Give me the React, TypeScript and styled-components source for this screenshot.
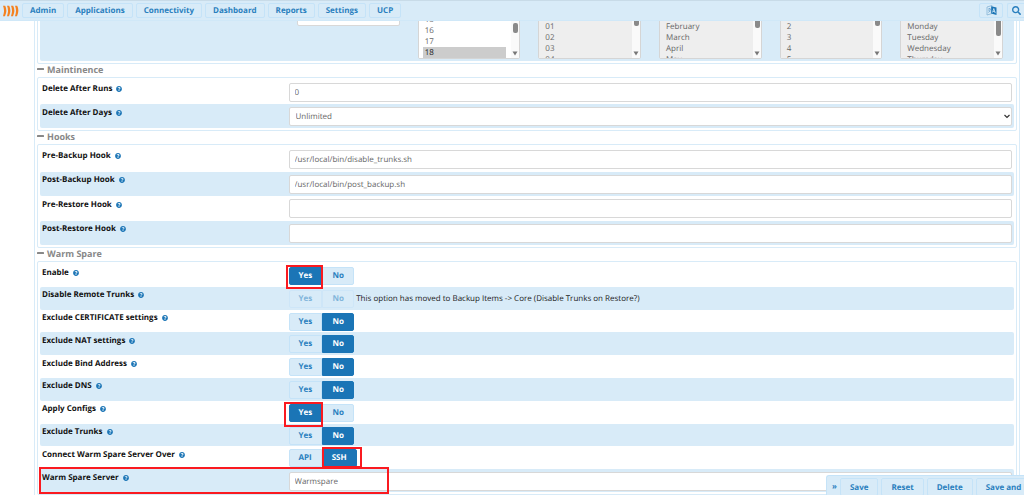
import React, { useEffect, useRef } from "react";
import styled, { createGlobalStyle, css } from "styled-components";
import { FaQuestionCircle, FaSearch } from "react-icons/fa";

const PALE = "#d8ebf8";
const LINE = "#c5e3f8";
const BLUE = "#1b75b6";
const LINK = "#2a7fbe";

const GlobalStyle = createGlobalStyle`
  * { box-sizing: border-box; }
  body { margin: 0; background: #fff; color: #111; font: 8px/16px "Open Sans", "Noto Sans", sans-serif; text-rendering: geometricPrecision; }
  button, input, select { font: inherit; margin: 0; text-rendering: inherit; }
`;

const Page = styled.div`
  position: relative;
  height: 100vh;
  display: flex;
  flex-direction: column;
  overflow: hidden;
`;

const Navbar = styled.header`
  position: relative;
  z-index: 2;
  flex: none;
  height: 21px;
  padding: 0 0 0 3px;
  display: flex;
  align-items: center;
  background: ${PALE};
  border-top: 1px solid #c8dbe8;
  border-bottom: 1px solid #d0e8f8;
`;

const Menu = styled.nav`
  display: flex;
  gap: 3px;
  margin-left: 3px;
  flex: 1;
`;

const NavButton = styled.button`
  height: 15px;
  padding: 0 7px;
  border: 1px solid ${LINE};
  border-radius: 2px;
  background: ${PALE};
  color: ${LINK};
  font-weight: 700;
  line-height: 13px;
  display: flex;
  align-items: center;
  justify-content: center;
  white-space: nowrap;
`;

const IconButton = styled(NavButton)`
  width: 24px;
  padding: 0;
  margin-left: 4px;
  &:last-child { width: 17px; border-right: 0; border-radius: 2px 0 0 2px; }
`;

const Main = styled.main`
  flex: 1;
  min-height: 0;
  overflow: hidden;
`;

const Panel = styled.form`
  margin: -24px 4px 0 34px;
  padding: 0 2px;
  border: 1px solid ${PALE};
`;

const Fieldset = styled.section`
  padding: 2px;
  border: 1px solid ${PALE};
  border-radius: 2px;
`;

const Heading = styled.h2`
  margin: 0;
  height: 13px;
  display: flex;
  align-items: flex-start;
  gap: 3px;
  color: #888;
  font-size: 9px;
  line-height: 11px;
  font-weight: 700;
  svg { margin-top: 4px; }
`;

const Rows = styled.div<{ $height: number }>`
  display: grid;
  grid-auto-rows: 1fr;
  height: ${(p) => p.$height}px;
`;

const Row = styled.div<{ $shade?: boolean }>`
  display: grid;
  grid-template-columns: minmax(0, 1fr) minmax(0, 3fr);
  min-height: 0;
  border-radius: 2px;
  background: ${(p) => (p.$shade ? PALE : "#fff")};
`;

const LabelCell = styled.div`
  display: flex;
  align-items: center;
  gap: 4px;
  height: 17px;
  padding-left: 2px;
  font-weight: 700;
  svg { color: ${BLUE}; }
`;

const ControlCell = styled.div`
  display: flex;
  align-items: flex-start;
  padding: 3px 2px 0 5px;
`;

const field = css`
  width: 100%;
  height: 19px;
  border: 1px solid #d8d8d8;
  border-radius: 2px;
  background: #fff;
  color: #666;
  outline: 0;
`;

const TextInput = styled.input`
  ${field}
  padding: 0 5px;
`;

const SelectWrap = styled.div`
  position: relative;
  width: 100%;
  display: flex;
  svg { position: absolute; right: 2px; top: 7px; pointer-events: none; }
`;

const Dropdown = styled.select`
  ${field}
  appearance: none;
  padding: 0 6px;
`;

const Toggle = styled.div<{ $disabled?: boolean }>`
  display: flex;
  opacity: ${(p) => (p.$disabled ? 0.5 : 1)};
`;

const ToggleOption = styled.button<{ $on?: boolean }>`
  height: 18px;
  min-width: 32px;
  padding: 0 9px;
  border: 1px solid ${(p) => (p.$on ? BLUE : LINE)};
  background: ${(p) => (p.$on ? BLUE : PALE)};
  color: ${(p) => (p.$on ? "#fff" : LINK)};
  font-weight: 700;
  line-height: 16px;
  &:first-child { min-width: 33px; border-radius: 2px 0 0 2px; }
  &:last-child { border-radius: 0 2px 2px 0; }
`;

const Note = styled.span`
  margin-left: 2px;
  line-height: 18px;
  color: #222;
`;

const Schedule = styled.div`
  height: 60px;
  padding: 0 11px 2px 257px;
  display: grid;
  grid-template-columns: repeat(6, minmax(0, 1fr));
  gap: 18px;
  border-radius: 2px;
  background: ${PALE};
`;

const ScheduleType = styled(Dropdown)`
  margin-top: 6px;
`;

const ListWrap = styled.div`
  position: relative;
  height: 50px;
  margin-top: 8px;
  overflow: hidden;
  border: 1px solid #d5d5d5;
  border-radius: 2px;
  background: #fff;
`;

const List = styled.select`
  display: block;
  width: 100%;
  height: 48px;
  padding: 0 13px 0 4px;
  border: 0;
  border-radius: 0;
  outline: 0;
  background: #fff;
  color: #666;
  scrollbar-width: none;
  &:disabled { background: #eee; color: #666; opacity: 1; }
  option { height: 11px; min-height: 11px; padding: 0 2px; line-height: 11px; color: #666; }
  option:checked { background: #ccc linear-gradient(#ccc, #ccc); color: #222; }
`;

const ScrollTrack = styled.span`
  position: absolute;
  top: 0;
  right: 0;
  bottom: 0;
  width: 8px;
  background: #fafafa;
  svg { position: absolute; left: 1px; bottom: 2px; }
`;

const ScrollThumb = styled.span<{ $top: number; $size: number }>`
  position: absolute;
  left: 2px;
  width: 5px;
  top: ${(p) => p.$top}px;
  height: ${(p) => p.$size}px;
  border-radius: 2px;
  background: #8a8a8a;
`;

const ActionBar = styled.div`
  position: absolute;
  z-index: 3;
  right: 0;
  bottom: 0;
  width: 198px;
  height: 20px;
  padding: 2px 0 0 5px;
  display: flex;
  gap: 3px;
  overflow: hidden;
  background: ${PALE};
  border: 1px solid ${LINE};
  border-width: 1px 0 0 1px;
  border-radius: 3px 0 0 0;
`;

const ActionButton = styled(NavButton)`
  flex: none;
  height: 18px;
  padding: 0 9px;
`;

const Collapse = styled.button`
  width: 5px;
  padding: 0;
  border: 0;
  background: none;
  color: ${LINK};
  font-weight: 700;
  line-height: 17px;
`;

const Mark = styled.span<{ $x: number; $y: number; $w: number; $h: number }>`
  position: absolute;
  z-index: 1;
  left: ${(p) => p.$x}px;
  top: ${(p) => p.$y}px;
  width: ${(p) => p.$w}px;
  height: ${(p) => p.$h}px;
  border: 2px solid #fa1a20;
  pointer-events: none;
`;

const Anchor = styled.div`
  position: relative;
  width: 100%;
  display: flex;
`;

const ServerRow = styled(Row)`
  position: relative;
`;

const Logo = () => (
  <svg width="16" height="12" viewBox="0 0 16 12" aria-hidden="true">
    <g fill="#f58220">
      {[0, 4, 8, 12].map((x) => (
        <path key={x} d={`M${x} .8 h2.200 Q${x + 4.6} 5.500 ${x + 2} 11.200 H${x} Q${x + 2} 5.500 ${x} .8z`} />
      ))}
    </g>
  </svg>
);

const LanguageIcon = () => (
  <svg width="11" height="11" viewBox="0 0 11 11" aria-hidden="true">
    <path d="M1 2 6 .5v8L1 10z" fill="#d8ebf8" stroke="#86b4d6" strokeWidth=".8" />
    <path d="M2 4h3M3.500 3v1M2.200 7.500Q4 6.500 4.500 4M2.500 5.200 4.500 7.200" stroke="#5d9ac8" strokeWidth=".7" fill="none" />
    <path d="M5.200 1.200 10.500 2.500v7.500L5.200 8.500z" fill={BLUE} />
    <path d="m6.500 7.500 1.300-4 1.500 4.600M7 6.300l2 .5" stroke="#d8ebf8" strokeWidth=".8" fill="none" />
  </svg>
);

const Dash = () => (
  <svg width="7" height="2" viewBox="0 0 7 2" aria-hidden="true">
    <rect width="7" height="2" rx=".5" fill="#888" />
  </svg>
);

type ListProps = { label: string; options: string[]; value?: string; scroll: number; thumb: [number, number]; disabled?: boolean };

const ListBox = ({ label, options, value, scroll, thumb, disabled }: ListProps) => {
  const ref = useRef<HTMLSelectElement>(null);
  useEffect(() => {
    if (ref.current) ref.current.scrollTop = scroll;
  }, [scroll]);
  return (
    <ListWrap>
      <List ref={ref} multiple aria-label={label} defaultValue={value ? [value] : []} disabled={disabled}>
        {options.map((o) => <option key={o}>{o}</option>)}
      </List>
      <ScrollTrack>
        <ScrollThumb $top={thumb[0]} $size={thumb[1]} />
        <svg width="6" height="5" viewBox="0 0 6 5"><path d="M.5.500h5L3 4.500z" fill="#777" /></svg>
      </ScrollTrack>
    </ListWrap>
  );
};

const Label = ({ id, text }: { id: string; text: string }) => (
  <LabelCell>
    <label htmlFor={id}>{text}</label>
    <FaQuestionCircle size={6} />
  </LabelCell>
);

const range = (from: number, to: number, pad = 1) =>
  Array.from({ length: to - from + 1 }, (_, i) => String(from + i).padStart(pad, "0"));

const MONTHS = ["January", "February", "March", "April", "May", "June", "July", "August"];
const DAYS = ["Sunday", "Monday", "Tuesday", "Wednesday", "Thursday", "Friday", "Saturday"];

const HOOKS = [
  ["Pre-Backup Hook", "/usr/local/bin/disable_trunks.sh"],
  ["Post-Backup Hook", "/usr/local/bin/post_backup.sh"],
  ["Pre-Restore Hook", ""],
  ["Post-Restore Hook", ""],
];

type Choice = { text: string; options?: [string, string]; on?: number; note?: string; mark?: [number, number, number, number] };

const CHOICES: Choice[] = [
  { text: "Enable", on: 0, mark: [-3, -2, 37, 24] },
  { text: "Disable Remote Trunks", note: "This option has moved to Backup Items -> Core (Disable Trunks on Restore?)" },
  { text: "Exclude CERTIFICATE settings", on: 1 },
  { text: "Exclude NAT settings", on: 1 },
  { text: "Exclude Bind Address", on: 1 },
  { text: "Exclude DNS", on: 1 },
  { text: "Apply Configs", on: 0, mark: [-5, -2, 39, 25] },
  { text: "Exclude Trunks", on: 1 },
  { text: "Connect Warm Spare Server Over", options: ["API", "SSH"], on: 1, mark: [33, -2, 40, 21] },
];

export default function App() {
  return (
    <Page>
      <GlobalStyle />
      <Navbar>
        <Logo />
        <Menu>
          {["Admin", "Applications", "Connectivity", "Dashboard", "Reports", "Settings", "UCP"].map((m) => (
            <NavButton key={m} type="button">{m}</NavButton>
          ))}
        </Menu>
        <IconButton type="button" aria-label="Language"><LanguageIcon /></IconButton>
        <IconButton type="button" aria-label="Search"><FaSearch size={9} /></IconButton>
      </Navbar>
      <Main>
        <Panel onSubmit={(e) => e.preventDefault()}>
          <Fieldset>
            <Schedule>
              <ScheduleType aria-label="Schedule type"><option></option></ScheduleType>
              <ListBox label="Minute" options={range(0, 59, 2)} value="18" scroll={161} thumb={[13, 10]} />
              <ListBox label="Hour" options={range(0, 23, 2)} scroll={0} thumb={[6, 10]} disabled />
              <ListBox label="Month" options={MONTHS} scroll={0} thumb={[6, 12]} disabled />
              <ListBox label="Day of month" options={range(1, 31)} scroll={0} thumb={[6, 10]} disabled />
              <ListBox label="Day of week" options={DAYS} scroll={0} thumb={[6, 20]} disabled />
            </Schedule>
          </Fieldset>

          <Heading><Dash />Maintinence</Heading>
          <Fieldset>
            <Rows $height={48}>
              <Row>
                <Label id="runs" text="Delete After Runs" />
                <ControlCell><TextInput id="runs" defaultValue="0" /></ControlCell>
              </Row>
              <Row $shade>
                <Label id="days" text="Delete After Days" />
                <ControlCell>
                  <SelectWrap>
                    <Dropdown id="days"><option>Unlimited</option></Dropdown>
                    <svg width="6" height="5" viewBox="0 0 6 5"><path d="m.5 1 2.500 2.500L5.500 1" fill="none" stroke="#333" strokeWidth="1.200" /></svg>
                  </SelectWrap>
                </ControlCell>
              </Row>
            </Rows>
          </Fieldset>

          <Heading><Dash />Hooks</Heading>
          <Fieldset>
            <Rows $height={98}>
              {HOOKS.map(([text, value], i) => (
                <Row key={text} $shade={i % 2 === 1}>
                  <Label id={`hook${i}`} text={text} />
                  <ControlCell><TextInput id={`hook${i}`} defaultValue={value} /></ControlCell>
                </Row>
              ))}
            </Rows>
          </Fieldset>

          <Heading><Dash />Warm Spare</Heading>
          <Fieldset>
            <Rows $height={228}>
              {CHOICES.map(({ text, options = ["Yes", "No"], on, note, mark }, i) => (
                <Row key={text} $shade={i % 2 === 1}>
                  <Label id={`choice${i}`} text={text} />
                  <ControlCell>
                    <Anchor>
                      <Toggle role="group" aria-label={text} $disabled={on === undefined}>
                        {options.map((o, n) => (
                          <ToggleOption
                            key={o}
                            id={n === 0 ? `choice${i}` : undefined}
                            type="button"
                            $on={on === n}
                            disabled={on === undefined}
                          >
                            {o}
                          </ToggleOption>
                        ))}
                      </Toggle>
                      {note && <Note>{note}</Note>}
                      {mark && <Mark $x={mark[0]} $y={mark[1]} $w={mark[2]} $h={mark[3]} />}
                    </Anchor>
                  </ControlCell>
                </Row>
              ))}
              <ServerRow $shade>
                <Label id="server" text="Warm Spare Server" />
                <ControlCell><TextInput id="server" defaultValue="Warmspare" /></ControlCell>
                <Mark $x={-1} $y={-2} $w={350} $h={27} />
              </ServerRow>
            </Rows>
          </Fieldset>
        </Panel>
      </Main>
      <ActionBar>
        <Collapse type="button" aria-label="Collapse">»</Collapse>
        {["Save", "Reset", "Delete", "Save and Run"].map((a) => (
          <ActionButton key={a} type="button">{a}</ActionButton>
        ))}
      </ActionBar>
    </Page>
  );
}
